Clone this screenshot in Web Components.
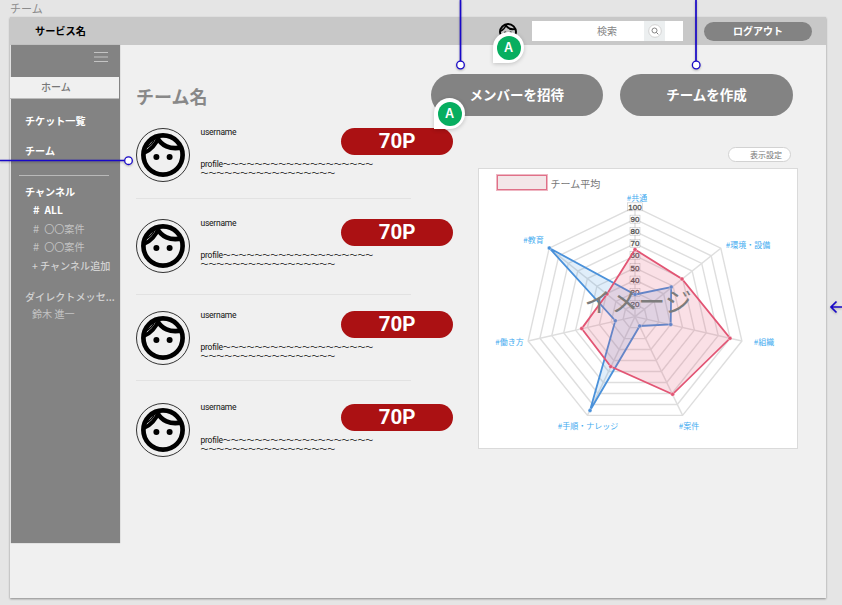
<!DOCTYPE html>
<html lang="ja">
<head>
<meta charset="utf-8">
<title>チーム</title>
<style>
html,body{margin:0;height:100%;overflow:hidden;background:#e5e5e5}
body{font-family:"Noto Sans CJK JP",sans-serif;--grey:#838383}
</style>
</head>
<body>
<team-screen></team-screen>
<script>
const define=(name,html,setup)=>customElements.define(name,class extends HTMLElement{
  connectedCallback(){
    if(this.shadowRoot)return;
    this.attachShadow({mode:'open'});
    const t=document.createElement('template');
    t.innerHTML=typeof html==='function'?html(this):html;
    this.shadowRoot.append(t.content.cloneNode(true));
    if(setup)setup(this);
  }
});

define('face-icon',`<style>:host{display:block}svg{display:block;width:100%;height:100%}</style>
<svg viewBox="0 0 44 44" fill="none" stroke="#000">
<circle cx="22" cy="22" r="19.600" stroke-width="4.700"/>
<path d="M17.500 4C15.500 11 9.500 17.500 3 20" stroke-width="4"/>
<path d="M16 4C20 12.500 29 17 41 14.300" stroke-width="4.600"/>
<path d="M13.500 6C12 10 8.500 13 5 15" stroke-width="1.400"/>
<g fill="#000" stroke="none"><circle cx="15.400" cy="24" r="3"/><circle cx="28.600" cy="24" r="3"/></g></svg>`);

define('pill-button',`<style>:host{display:flex;box-sizing:border-box;align-items:center;justify-content:center;border-radius:99px;background:var(--grey);color:#fff;font-weight:700;white-space:nowrap}</style><slot></slot>`);

define('search-box',`<style>
:host{display:flex;width:151px;height:19.5px;background:#fff;align-items:center;box-sizing:border-box;padding-left:65px}
span{font-size:10px;line-height:18px;margin-top:-1px;color:#858585;width:47px}
i{display:flex;align-items:center;justify-content:center;width:21px;height:19.5px;background:#eceff0}
svg{width:14px;height:14px}</style>
<span>検索</span><i><svg viewBox="0 0 14 14" fill="none"><circle cx="7" cy="7" r="6.300" fill="#fff" stroke="#cfcfcf" stroke-width=".9"/><circle cx="6.500" cy="6.500" r="2.500" stroke="#777" stroke-width=".9"/><path d="M8.400 8.400L10.300 10.300" stroke="#777" stroke-width="1"/></svg></i>`);

define('top-bar',`<style>
:host{display:flex;height:28px;background:#c8c8c8;align-items:center;box-sizing:border-box;padding:0 14px 0 25px}
b{font-size:10.200px;line-height:15px;margin-top:-1px;color:#000;flex:1;font-weight:700}
face-icon{width:18px;height:18px;margin:1px 15.500px 0 0}
search-box{margin-right:21px}
pill-button{width:108px;height:19px;font-size:10px;padding-bottom:1px}</style>
<b>サービス名</b><face-icon></face-icon><search-box></search-box><pill-button>ログアウト</pill-button>`);

define('nav-item',`<style>
:host{display:block;height:var(--h,18.500px);line-height:var(--h,18.500px);padding-left:14px;font-size:10.100px;color:#fff;font-weight:700;white-space:pre}
:host([sub]){padding-left:22px}
:host([dim]){color:#c3c3c3;font-weight:400}
:host([mid]){color:#d2d2d2;font-weight:500}
</style><slot></slot>`);

define('side-nav',`<style>
:host{display:flex;flex-direction:column;width:108.500px;height:498px;box-sizing:border-box;background:var(--grey);margin:0 .5px 0 1px;box-shadow:0 0 1px #999}
.menu{height:32px;display:flex;justify-content:flex-end;box-sizing:border-box;padding:7px 12px 0 0}
.menu svg{width:14px;height:11px}
.home{height:21px;line-height:20px;background:#f0f0f0;color:#777;font-size:10px;font-weight:500;padding-left:31px;margin-left:-1px;margin-bottom:7px;border-bottom:1px solid #bbb;width:78px}
hr{border:0;height:1px;width:90px;background:#b9b9b9;margin:9px 0 6px 8px}
.gap{height:11.500px}
.hash{letter-spacing:1.300px;font-size:11px;line-height:1}</style>
<div class="menu"><svg viewBox="0 0 14 11" stroke="#c4c4c4" stroke-width="1.200"><path d="M0 .5H14M0 5H14M0 9.500H14"/></svg></div>
<div class="home">ホーム</div>
<nav-item style="--h:30px">チケット一覧</nav-item>
<nav-item style="--h:30px">チーム</nav-item>
<hr>
<nav-item style="--h:19px">チャンネル</nav-item>
<nav-item sub><span class="hash"># </span>ALL</nav-item>
<nav-item sub dim><span class="hash"># </span>〇〇案件</nav-item>
<nav-item sub dim><span class="hash"># </span>〇〇案件</nav-item>
<nav-item sub mid style="padding-left:21px">+ チャンネル追加</nav-item>
<div class="gap"></div>
<nav-item mid style="--h:19px">ダイレクトメッセ...</nav-item>
<nav-item sub dim style="--h:16px;padding-left:21px">鈴木 進一</nav-item>`);

define('member-row',`<style>
:host{display:grid;grid-template-columns:64.500px 140.500px 112px;width:318px;box-sizing:border-box;height:var(--row);align-items:start;align-content:start;font-family:Roboto,"Noto Sans CJK JP",sans-serif}
.avatar{width:54px;height:54px;box-sizing:border-box;border:1px solid #333;border-radius:50%;display:flex;align-items:center;justify-content:center}
face-icon{width:44px;height:44px}
.info{font-size:8.500px;letter-spacing:-.25px;line-height:9px;color:#111;white-space:nowrap;width:141px}
.name{height:31.500px}
.tilde{font:400 8px/9px "Noto Sans CJK JP",sans-serif;letter-spacing:-.08px}
div.tilde{margin-top:-1px}
.score{height:27px;border-radius:14px;background:#ab1113;color:#fff;font-size:20.500px;font-weight:700;line-height:27px;text-align:center;margin-top:.5px}
.line{grid-column:1/-1;width:275px;height:1px;background:#e2e2e2;align-self:start;margin-top:var(--line)}
:host([last]) .line{display:none}</style>
<div class="avatar"><face-icon></face-icon></div>
<div class="info"><div class="name">username</div><div>profile<span class="tilde">〜〜〜〜〜〜〜〜〜〜〜〜〜〜〜〜〜〜〜</span></div><div class="tilde">〜〜〜〜〜〜〜〜〜〜〜〜〜〜〜〜〜</div></div>
<div class="score">70P</div><div class="line"></div>`);

define('radar-chart',()=>{
  const cx=635,cy=316.6,R=109.700;
  const pt=(i,r)=>[cx+Math.sin(i*2*Math.PI/7)*r,cy-Math.cos(i*2*Math.PI/7)*r].map(v=>v.toFixed(1)).join();
  let rings='',nums='';
  for(let k=1;k<=9;k++){
    rings+=`<polygon points="${[0,1,2,3,4,5,6].map(i=>pt(i,R*k/9)).join(' ')}"/>`;
    const y=cy-R*k/9,w=k===9?15:10;
    nums+=`<rect x="${cx-w/2}" y="${y-4}" width="${w}" height="8" fill="#fff" opacity=".65"/><text x="${cx}" y="${y+2.800}">${(k+1)*10}</text>`;
  }
  for(let i=0;i<7;i++)rings+=`<path d="M${cx},${cy}L${pt(i,R)}"/>`;
  const series=(p,stroke,fill)=>`<polygon points="${p.map(q=>q.join()).join(' ')}" fill="${fill}" stroke="${stroke}" stroke-width="1.800"/>`+p.map(q=>`<circle cx="${q[0]}" cy="${q[1]}" r="2" fill="${stroke}" stroke="#fff" stroke-opacity=".7" stroke-width=".5"/>`).join('');
  const labels=[['#共通',637,201],['#教育',533.500,242.500],['#環境・設備',748,247.500],['#組織',764,344.500],['#案件',689,428.500],['#手順・ナレッジ',588,428.500],['#働き方',509.500,344.500]];
  return `<style>:host{display:block}svg{display:block;width:100%;height:100%}
  .n{font:400 8px "Liberation Sans",sans-serif;fill:#555;stroke:#555;stroke-width:.3px;text-anchor:middle}
  .l{font:8px "Noto Sans CJK JP",sans-serif;fill:#45acf0;text-anchor:middle}
  .w{font:400 27px "Noto Sans CJK JP",sans-serif;fill:#7c7c7c;text-anchor:middle}</style>
  <svg viewBox="479 193 318 255"><g fill="none" stroke="#dedede" stroke-width="1.400">${rings}</g><g class="n">${nums}</g>
  ${series([[635,294.500],[671.200,287],[670.700,324.500],[639.700,326],[590,410.500],[615.300,320.700],[549.300,248]],'#4a91da','rgba(74,153,224,.17)')}
  ${series([[635,249.500],[682,279],[730,338.300],[672.600,394.300],[610.700,366.600],[581.700,328.600],[607,294]],'#e25574','rgba(230,85,116,.18)')}
  <g class="l">${labels.map(l=>`<text x="${l[1]}" y="${l[2]}">${l[0]}</text>`).join('')}</g>
  <text class="w" x="638" y="311.500">イメージ</text></svg>`;
});

define('chart-card',`<style>
:host{display:flex;flex-direction:column;box-sizing:border-box;width:320px;height:281px;background:#fff;border:1px solid #dadada}
.legend{display:flex;height:24px;padding:6px 0 0 17.500px;box-sizing:border-box;gap:3.500px;color:#777;font-size:10px;line-height:17px}
i{box-sizing:border-box;width:50.500px;height:15px;border:1.500px solid #e07088;background:#f3e6e8;outline:.5px solid #e0708880}
radar-chart{width:318px;height:255px}</style>
<div class="legend"><i></i><span>チーム平均</span></div><radar-chart></radar-chart>`);

define('team-main',`<style>
:host{display:block;flex:1;padding:28.500px 0 0 16px;box-sizing:border-box}
.head{display:flex;height:42px;align-items:center}
h1{margin:0;width:294.500px;font-size:18px;line-height:27px;color:#888;font-weight:700;padding-top:4px;box-sizing:border-box}
.head pill-button{width:172.500px;height:42px;font-size:13.500px;margin-right:17.300px;padding-bottom:2px}
.body{display:flex;gap:24px;margin-top:12px}
.right{padding-top:19.500px}
.right pill-button{width:63px;height:15px;margin:0 0 5.500px 250px;background:#fff;border:1px solid #d2d2d2;color:#777;font-size:8px;font-weight:400;padding:0 0 1px 13px}</style>
<div class="head"><h1>チーム名</h1><pill-button>メンバーを招待</pill-button><pill-button style="margin:0">チームを作成</pill-button></div>
<div class="body"><div>
<member-row style="--row:91px;--line:16.500px"></member-row>
<member-row style="--row:92px;--line:21.500px"></member-row>
<member-row style="--row:92.500px;--line:15px"></member-row>
<member-row last style="--row:54px"></member-row></div>
<div class="right"><pill-button>表示設定</pill-button><chart-card></chart-card></div></div>`);

define('comment-pin',`<style>:host{position:absolute;width:31px;height:31px;background:#fff;border-radius:50% 50% 50% 0;display:flex;align-items:center;justify-content:center;box-shadow:0 1px 4px #0003}
b{width:24px;height:24px;border-radius:50%;background:#07ae60;color:#fff;font:600 12.500px/24px Inter,sans-serif;text-align:center}</style><b>A</b>`);

define('flow-lines',`<style>:host{position:absolute;inset:0;pointer-events:none}svg{display:block;width:842px;height:605px;filter:drop-shadow(0 1px 1px #0004)}</style>
<svg viewBox="0 0 842 605" fill="none" stroke="#1808c8" stroke-width="1.700"><path d="M460.500 0V61M696 0V61M0 160.500H124.500M842 307H831M836.500 301.500L831 307L836.500 312.500"/><g fill="#fff" stroke-width="1.300"><circle cx="460.500" cy="65" r="3.800"/><circle cx="696.200" cy="65" r="3.800"/><circle cx="128.500" cy="160.700" r="3.800"/></g></svg>`);

define('team-screen',`<style>
:host{display:block;position:relative;width:842px;height:605px;overflow:hidden;background:#e5e5e5}
.title{height:17px;padding-left:10px;font-size:11px;line-height:16px;color:#8c8c8c}
.board{width:816px;height:581px;margin-left:10px;background:#f0f0f0;box-shadow:0 1px 2px #0006}
.cols{display:flex}</style>
<div class="title">チーム</div>
<div class="board"><top-bar></top-bar><div class="cols"><side-nav></side-nav><team-main></team-main></div></div>
<comment-pin style="left:493px;top:32px"></comment-pin><comment-pin style="left:434px;top:98px"></comment-pin>
<flow-lines></flow-lines>`);
</script>
</body>
</html>
